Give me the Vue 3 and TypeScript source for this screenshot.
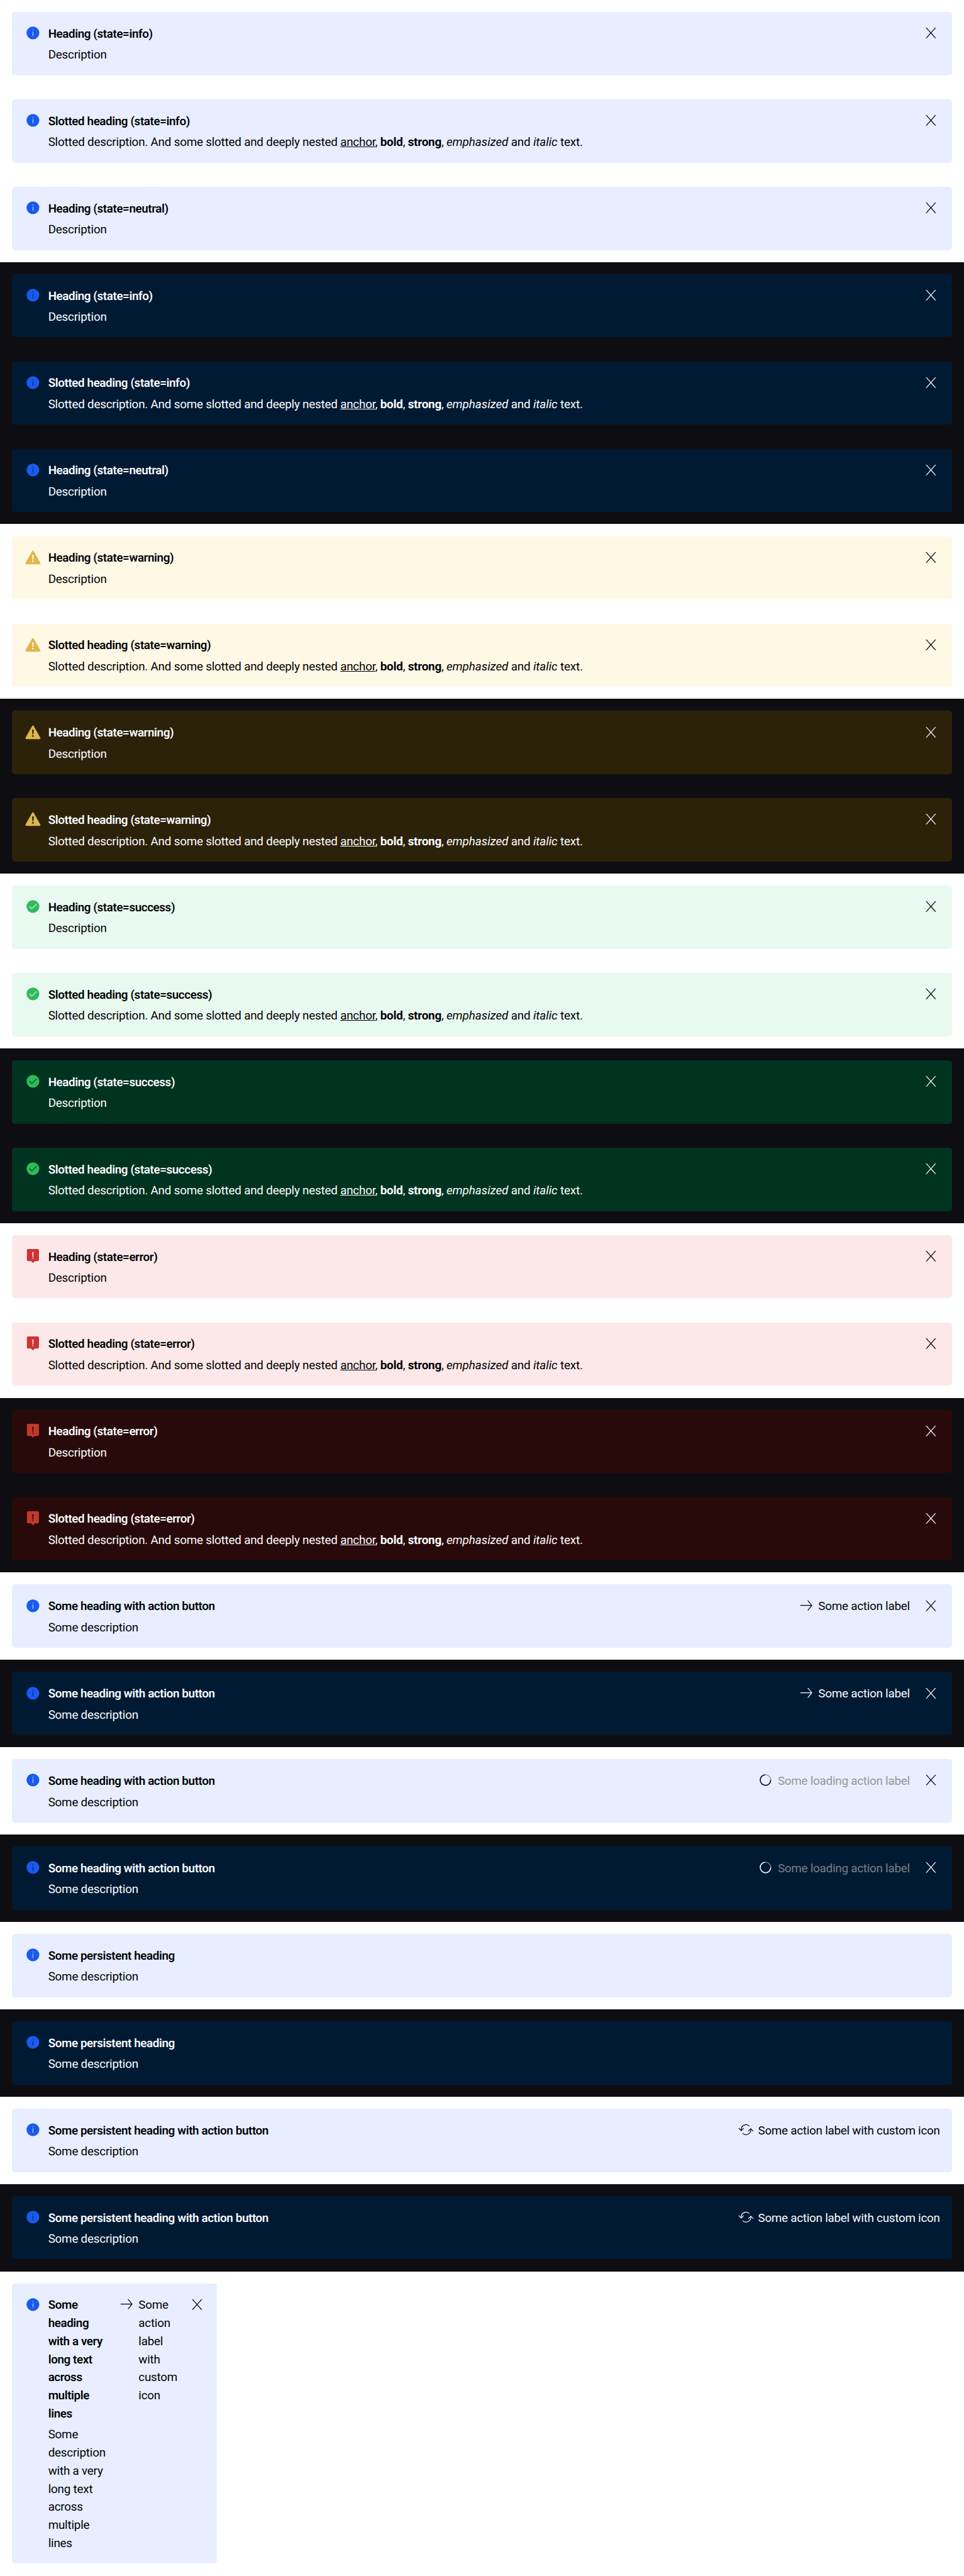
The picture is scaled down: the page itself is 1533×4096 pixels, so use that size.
<script setup lang="ts">
type State = 'info' | 'warning' | 'success' | 'error'
type ActionIcon = 'arrow' | 'spinner' | 'sync'

interface Banner {
  state: State
  heading: string
  description?: string
  action?: { icon: ActionIcon; label: string }
  persistent?: boolean
  narrow?: boolean
}

interface Section {
  theme: 'light' | 'dark'
  banners: Banner[]
}

const themes = ['light', 'dark'] as const

const both = (banners: Banner[]): Section[] => themes.map((theme) => ({ theme, banners }))

const stateBanners = (state: State): Banner[] => [
  { state, heading: `Heading (state=${state})`, description: 'Description' },
  { state, heading: `Slotted heading (state=${state})` },
]

const sections: Section[] = [
  ...both([
    ...stateBanners('info'),
    { state: 'info', heading: 'Heading (state=neutral)', description: 'Description' },
  ]),
  ...both(stateBanners('warning')),
  ...both(stateBanners('success')),
  ...both(stateBanners('error')),
  ...both([
    {
      state: 'info',
      heading: 'Some heading with action button',
      description: 'Some description',
      action: { icon: 'arrow', label: 'Some action label' },
    },
  ]),
  ...both([
    {
      state: 'info',
      heading: 'Some heading with action button',
      description: 'Some description',
      action: { icon: 'spinner', label: 'Some loading action label' },
    },
  ]),
  ...both([
    { state: 'info', heading: 'Some persistent heading', description: 'Some description', persistent: true },
  ]),
  ...both([
    {
      state: 'info',
      heading: 'Some persistent heading with action button',
      description: 'Some description',
      action: { icon: 'sync', label: 'Some action label with custom icon' },
      persistent: true,
    },
  ]),
  {
    theme: 'light',
    banners: [
      {
        state: 'info',
        heading: 'Some\nheading\nwith a very\nlong text\nacross\nmultiple\nlines',
        description: 'Some\ndescription\nwith a very\nlong text\nacross\nmultiple\nlines',
        action: { icon: 'arrow', label: 'Some\naction\nlabel\nwith\ncustom\nicon' },
        narrow: true,
      },
    ],
  },
]
</script>

<template>
  <main class="page">
    <section v-for="(section, s) in sections" :key="s" class="section" :class="section.theme">
      <div
        v-for="(banner, b) in section.banners"
        :key="b"
        class="banner"
        :class="[banner.state, { narrow: banner.narrow }]"
      >
        <svg class="icon state-icon" viewBox="0 0 24 24" aria-hidden="true">
          <template v-if="banner.state === 'info'">
            <circle cx="12" cy="12" r="8.5" fill="currentColor" />
            <path class="knock" d="M11.6 10.5h.8V16h-.8zM11.5 7.7h1v1h-1z" />
          </template>
          <template v-else-if="banner.state === 'warning'">
            <path
              fill="currentColor"
              d="M10.9 3.7c.5-.95 1.7-.95 2.2 0l8.7 15.6c.4.8 0 1.7-.9 1.7H3.1c-.9 0-1.3-.9-.9-1.7z"
            />
            <path class="knock" d="M10.8 8.6h2.4l-.5 6.3h-1.4zM10.9 16.1h2.2v1.8h-2.2z" />
          </template>
          <template v-else-if="banner.state === 'success'">
            <circle cx="12" cy="12" r="8.5" fill="currentColor" />
            <path class="knock-line" d="M7.3 11.5l3.2 3.6 6.4-6.5" />
          </template>
          <template v-else>
            <path
              fill="currentColor"
              d="M5.6 2.5h12.8c.9 0 1.6.7 1.6 1.6V17c0 .9-.7 1.6-1.6 1.6h-4L12 21l-2.4-2.4h-4C4.7 18.6 4 17.9 4 17V4.100c0-.9.7-1.6 1.6-1.6z"
            />
            <path class="knock" d="M11.1 6.4h1.8l-.4 7.1h-1zM11.4 14.3h1.2v1.4h-1.2z" />
          </template>
        </svg>

        <div class="content">
          <h5 class="heading">{{ banner.heading }}</h5>
          <p v-if="banner.description" class="description">{{ banner.description }}</p>
          <p v-else class="description">Slotted description. And some slotted and deeply nested <a class="anchor">anchor</a>, <b>bold</b>, <strong>strong</strong>, <em>emphasized</em> and <i>italic</i> text.</p>
        </div>

        <button v-if="banner.action" class="action" :class="{ loading: banner.action.icon === 'spinner' }" type="button">
          <svg class="icon" viewBox="0 0 24 24" aria-hidden="true">
            <path
              v-if="banner.action.icon === 'arrow'"
              fill="currentColor"
              d="M4 10.9h14.1L13.3 5h1.3l5.2 6.4-5.2 6.6h-1.3l4.8-6.1H4z"
            />
            <template v-else-if="banner.action.icon === 'sync'">
              <g fill="none" stroke="currentColor" stroke-width="1">
                <path d="M5.7 12.9A6.35 6.35 0 0 1 16.5 7.4" />
                <path d="M18.3 11.1A6.35 6.35 0 0 1 7.5 16.6" />
                <path d="M2.3 9.9l3.3 3.3 3.2-3.3" />
                <path d="M21.7 14.1l-3.3-3.3-3.2 3.3" />
              </g>
            </template>
            <g v-else fill="none" stroke-width="1.2">
              <circle class="track" cx="12" cy="12" r="7" />
              <path stroke="currentColor" d="M19 12A7 7 0 1 1 11.2 5.05" />
            </g>
          </svg>
          <span class="label">{{ banner.action.label }}</span>
        </button>

        <button v-if="!banner.persistent" class="close" type="button" aria-label="Close">
          <svg class="icon" viewBox="0 0 24 24" aria-hidden="true">
            <path
              fill="currentColor"
              d="M5.1 5.1h1.35L12 11.25l5.55-6.15h1.35L12.7 12l6.2 6.9h-1.35L12 12.75 6.45 18.9H5.1l6.2-6.9z"
            />
          </svg>
        </button>
      </div>
    </section>
  </main>
</template>

<style>
html {
  font-size: 19.1625px;
}

body {
  margin: 0;
  background: #fff;
}
</style>

<style scoped>
.page {
  font-family: Roboto, "Liberation Sans", sans-serif;
  font-size: 0.98rem;
  line-height: 1.5rem;
  text-rendering: geometricPrecision;
}

.section {
  display: flex;
  flex-direction: column;
  gap: 2rem;
  padding: 1rem;
}

.light {
  --text: #010205;
  --muted: #949598;
  background: #fff;
}

.dark {
  --text: #fbfcff;
  --muted: #7c7f85;
  background: #0e0e12;
}

.banner {
  display: flex;
  align-items: flex-start;
  box-sizing: border-box;
  height: 5.25rem;
  padding: 1rem;
  border-radius: 0.25rem;
  background: var(--soft);
  color: var(--text);
}

.light .info { --soft: #e8eeff; --accent: #1a5aee; }
.dark .info { --soft: #001a33; --accent: #1a5aee; }
.light .warning { --soft: #fff8e5; --accent: #dfb64a; }
.dark .warning { --soft: #2c220a; --accent: #dfb64a; }
.light .success { --soft: #e8f9ef; --accent: #31b95e; }
.dark .success { --soft: #003320; --accent: #2dbb5a; }
.light .error { --soft: #fce8e9; --accent: #cd3235; }
.dark .error { --soft: #290a0a; --accent: #c0392b; }

.icon {
  display: block;
  flex: none;
  width: 1.5rem;
  height: 1.5rem;
}

.state-icon {
  margin-right: 0.5rem;
  color: var(--accent);
}

.knock {
  fill: var(--soft);
}

.knock-line {
  fill: none;
  stroke: var(--soft);
  stroke-width: 0.9;
}

.content {
  flex: 1;
  min-width: 0;
  padding-top: 0.08rem;
}

.heading,
.description {
  margin: 0;
  font-size: inherit;
  white-space: pre-line;
}

.heading {
  margin-bottom: 0.25rem;
  font-weight: 600;
  letter-spacing: -0.0194rem;
}

.description {
  font-weight: 400;
  letter-spacing: -0.0095rem;
}

.anchor {
  text-decoration: underline;
}

b,
strong {
  font-weight: 700;
}

em,
i {
  letter-spacing: 0;
}

.action,
.close {
  display: flex;
  flex: none;
  align-items: flex-start;
  margin: 0 0 0 1rem;
  padding: 0;
  border: 0;
  background: none;
  color: inherit;
  font: inherit;
  text-align: left;
}

.action {
  gap: 0.25rem;
}

.label {
  padding-top: 0.08rem;
  letter-spacing: -0.0115rem;
  white-space: pre;
}

.loading .label {
  color: var(--muted);
}

.track {
  stroke: var(--muted);
}

.narrow {
  width: 17rem;
  height: 23.25rem;
}

.narrow .content {
  flex: none;
  width: 4.75rem;
}

.narrow .heading,
.narrow .description {
  white-space: pre;
}

.narrow .label {
  width: 3.125rem;
}
</style>
